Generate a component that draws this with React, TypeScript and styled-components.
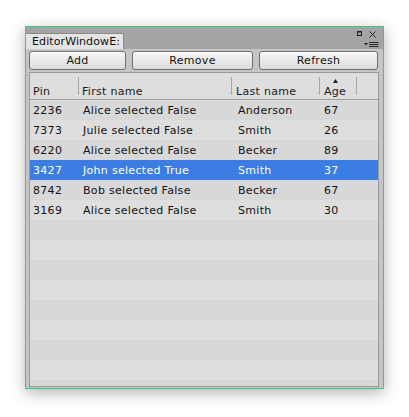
import React from "react";
import styled, { createGlobalStyle } from "styled-components";

const Global = createGlobalStyle`
  html, body { margin: 0; padding: 0; background: #ffffff; }
  body { width: 409px; height: 417px; overflow: hidden; font-family: "DejaVu Sans", Verdana, sans-serif; font-size: 11px; letter-spacing: 0.3px; }
  * { box-sizing: border-box; }
`;

const Window = styled.div`
  margin: 26px 0 0 25px;
  width: 359px;
  height: 363px;
  border: 1px solid #27d37b;
  background: #c5c5c5;
  box-shadow: 0 4px 14px rgba(0, 0, 0, 0.3);
  display: flex;
  flex-direction: column;
`;

const TitleBar = styled.div`
  height: 22px;
  background: #a4a4a4;
  display: flex;
  align-items: flex-end;
  justify-content: space-between;
`;

const Tab = styled.div`
  width: 98px;
  height: 16px;
  background: #e4e4e4;
  border: 1px solid #8a8a8a;
  border-bottom: none;
  border-left: none;
  border-radius: 0 2px 0 0;
  padding-left: 6px;
  line-height: 15px;
  color: #111;
  white-space: nowrap;
  overflow: hidden;
  letter-spacing: 0.1px;
`;

const TitleIcons = styled.svg`
  align-self: flex-start;
  margin-top: 3px;
  margin-right: 4px;
`;

const Body = styled.div`
  flex: 1;
  display: flex;
  flex-direction: column;
  padding: 2px 4px 1px 3px;
  min-height: 0;
`;

const Toolbar = styled.div`
  display: flex;
  gap: 6px;
  height: 19px;
`;

const Button = styled.button<{ $w: number }>`
  width: ${(p) => p.$w}px;
  height: 19px;
  padding: 0;
  border: 1px solid #6f6f6f;
  border-radius: 3px;
  background: linear-gradient(#f6f6f6, #dcdcdc);
  font-family: "DejaVu Sans", Verdana, sans-serif;
  font-size: 11px;
  letter-spacing: 0.3px;
  color: #111;
  line-height: 16px;
  box-shadow: inset 0 1px 0 #ffffff;
`;

const List = styled.div`
  margin-top: 2px;
  width: 350px;
  flex: 1;
  min-height: 0;
  border: 1px solid #9a9a9a;
  background: #dedede;
  display: flex;
  flex-direction: column;
  overflow: hidden;
`;

const Header = styled.div`
  height: 27px;
  flex-shrink: 0;
  padding: 4px 0 4px 0;
  display: flex;
  border-bottom: 1px solid #a3a3a3;
  background: #dedede;
`;

const HeaderCell = styled.div<{ $w?: number; $pad: number; $sep?: boolean }>`
  ${(p) => (p.$w ? `width: ${p.$w}px;` : "flex: 1;")}
  flex-shrink: 0;
  padding-left: ${(p) => p.$pad}px;
  border-left: ${(p) => (p.$sep ? "1px solid #a8a8a8" : "none")};
  display: flex;
  align-items: flex-end;
  color: #1a1a1a;
`;

const HeaderLabel = styled.div`
  display: inline-flex;
  flex-direction: column;
  align-items: center;
  line-height: 13px;
  margin-bottom: -3px;
  white-space: nowrap;
`;

const SortArrow = styled.svg`
  display: block;
  margin-bottom: 2px;
`;

const Row = styled.div<{ $odd: boolean; $sel: boolean }>`
  height: 20px;
  flex-shrink: 0;
  display: flex;
  overflow: hidden;
  background: ${(p) => (p.$sel ? "#3c7de4" : p.$odd ? "#dedede" : "#d8d8d8")};
  color: ${(p) => (p.$sel ? "#ffffff" : "#111111")};
`;

const Cell = styled.div<{ $w?: number; $pad: number }>`
  ${(p) => (p.$w ? `width: ${p.$w}px;` : "flex: 1;")}
  flex-shrink: 0;
  padding-left: ${(p) => p.$pad}px;
  padding-top: 1px;
  line-height: 20px;
  white-space: nowrap;
`;

const data = [
  { pin: "2236", first: "Alice selected False", last: "Anderson", age: "67" },
  { pin: "7373", first: "Julie selected False", last: "Smith", age: "26" },
  { pin: "6220", first: "Alice selected False", last: "Becker", age: "89" },
  { pin: "3427", first: "John selected True", last: "Smith", age: "37", sel: true },
  { pin: "8742", first: "Bob selected False", last: "Becker", age: "67" },
  { pin: "3169", first: "Alice selected False", last: "Smith", age: "30" },
];

export default function App() {
  const rows = Array.from({ length: 15 }, (_, i) => data[i] ?? null);
  return (
    <>
      <Global />
      <Window>
        <TitleBar>
          <Tab>EditorWindowE:</Tab>
          <TitleIcons width="22" height="18" viewBox="0 0 22 18">
            <rect x="0.5" y="1.5" width="4" height="4" fill="none" stroke="#1e1e1e" />
            <line x1="0" y1="2" x2="5" y2="2" stroke="#1e1e1e" />
            <path d="M12.5 1.5 L18.5 7.5 M18.5 1.5 L12.5 7.5" stroke="#2a2a2a" strokeWidth="1" fill="none" />
            <path d="M7 13 L11 13 L9 15.5 Z" fill="#2a2a2a" />
            <path d="M12 12.5 H21.5 M12 14.5 H21.5 M12 16.5 H21.5" stroke="#2a2a2a" strokeWidth="1" />
          </TitleIcons>
        </TitleBar>
        <Body>
          <Toolbar>
            <Button $w={97}>Add</Button>
            <Button $w={121}>Remove</Button>
            <Button $w={119}>Refresh</Button>
          </Toolbar>
          <List>
            <Header>
              <HeaderCell $w={48} $pad={3}>
                <HeaderLabel>Pin</HeaderLabel>
              </HeaderCell>
              <HeaderCell $w={153} $pad={3} $sep>
                <HeaderLabel>First name</HeaderLabel>
              </HeaderCell>
              <HeaderCell $w={88} $pad={4} $sep>
                <HeaderLabel>Last name</HeaderLabel>
              </HeaderCell>
              <HeaderCell $w={37} $pad={4} $sep>
                <HeaderLabel>
                  <SortArrow width="5" height="4" viewBox="0 0 5 4">
                    <path d="M0 4 L2.5 0 L5 4 Z" fill="#222" />
                  </SortArrow>
                  Age
                </HeaderLabel>
              </HeaderCell>
              <HeaderCell $pad={0} $sep />
            </Header>
            {rows.map((r, i) => (
              <Row key={i} $odd={i % 2 === 1} $sel={!!r?.sel}>
                <Cell $w={48} $pad={3}>{r?.pin}</Cell>
                <Cell $w={155} $pad={5}>{r?.first}</Cell>
                <Cell $w={86} $pad={5}>{r?.last}</Cell>
                <Cell $pad={5}>{r?.age}</Cell>
              </Row>
            ))}
          </List>
        </Body>
      </Window>
    </>
  );
}
